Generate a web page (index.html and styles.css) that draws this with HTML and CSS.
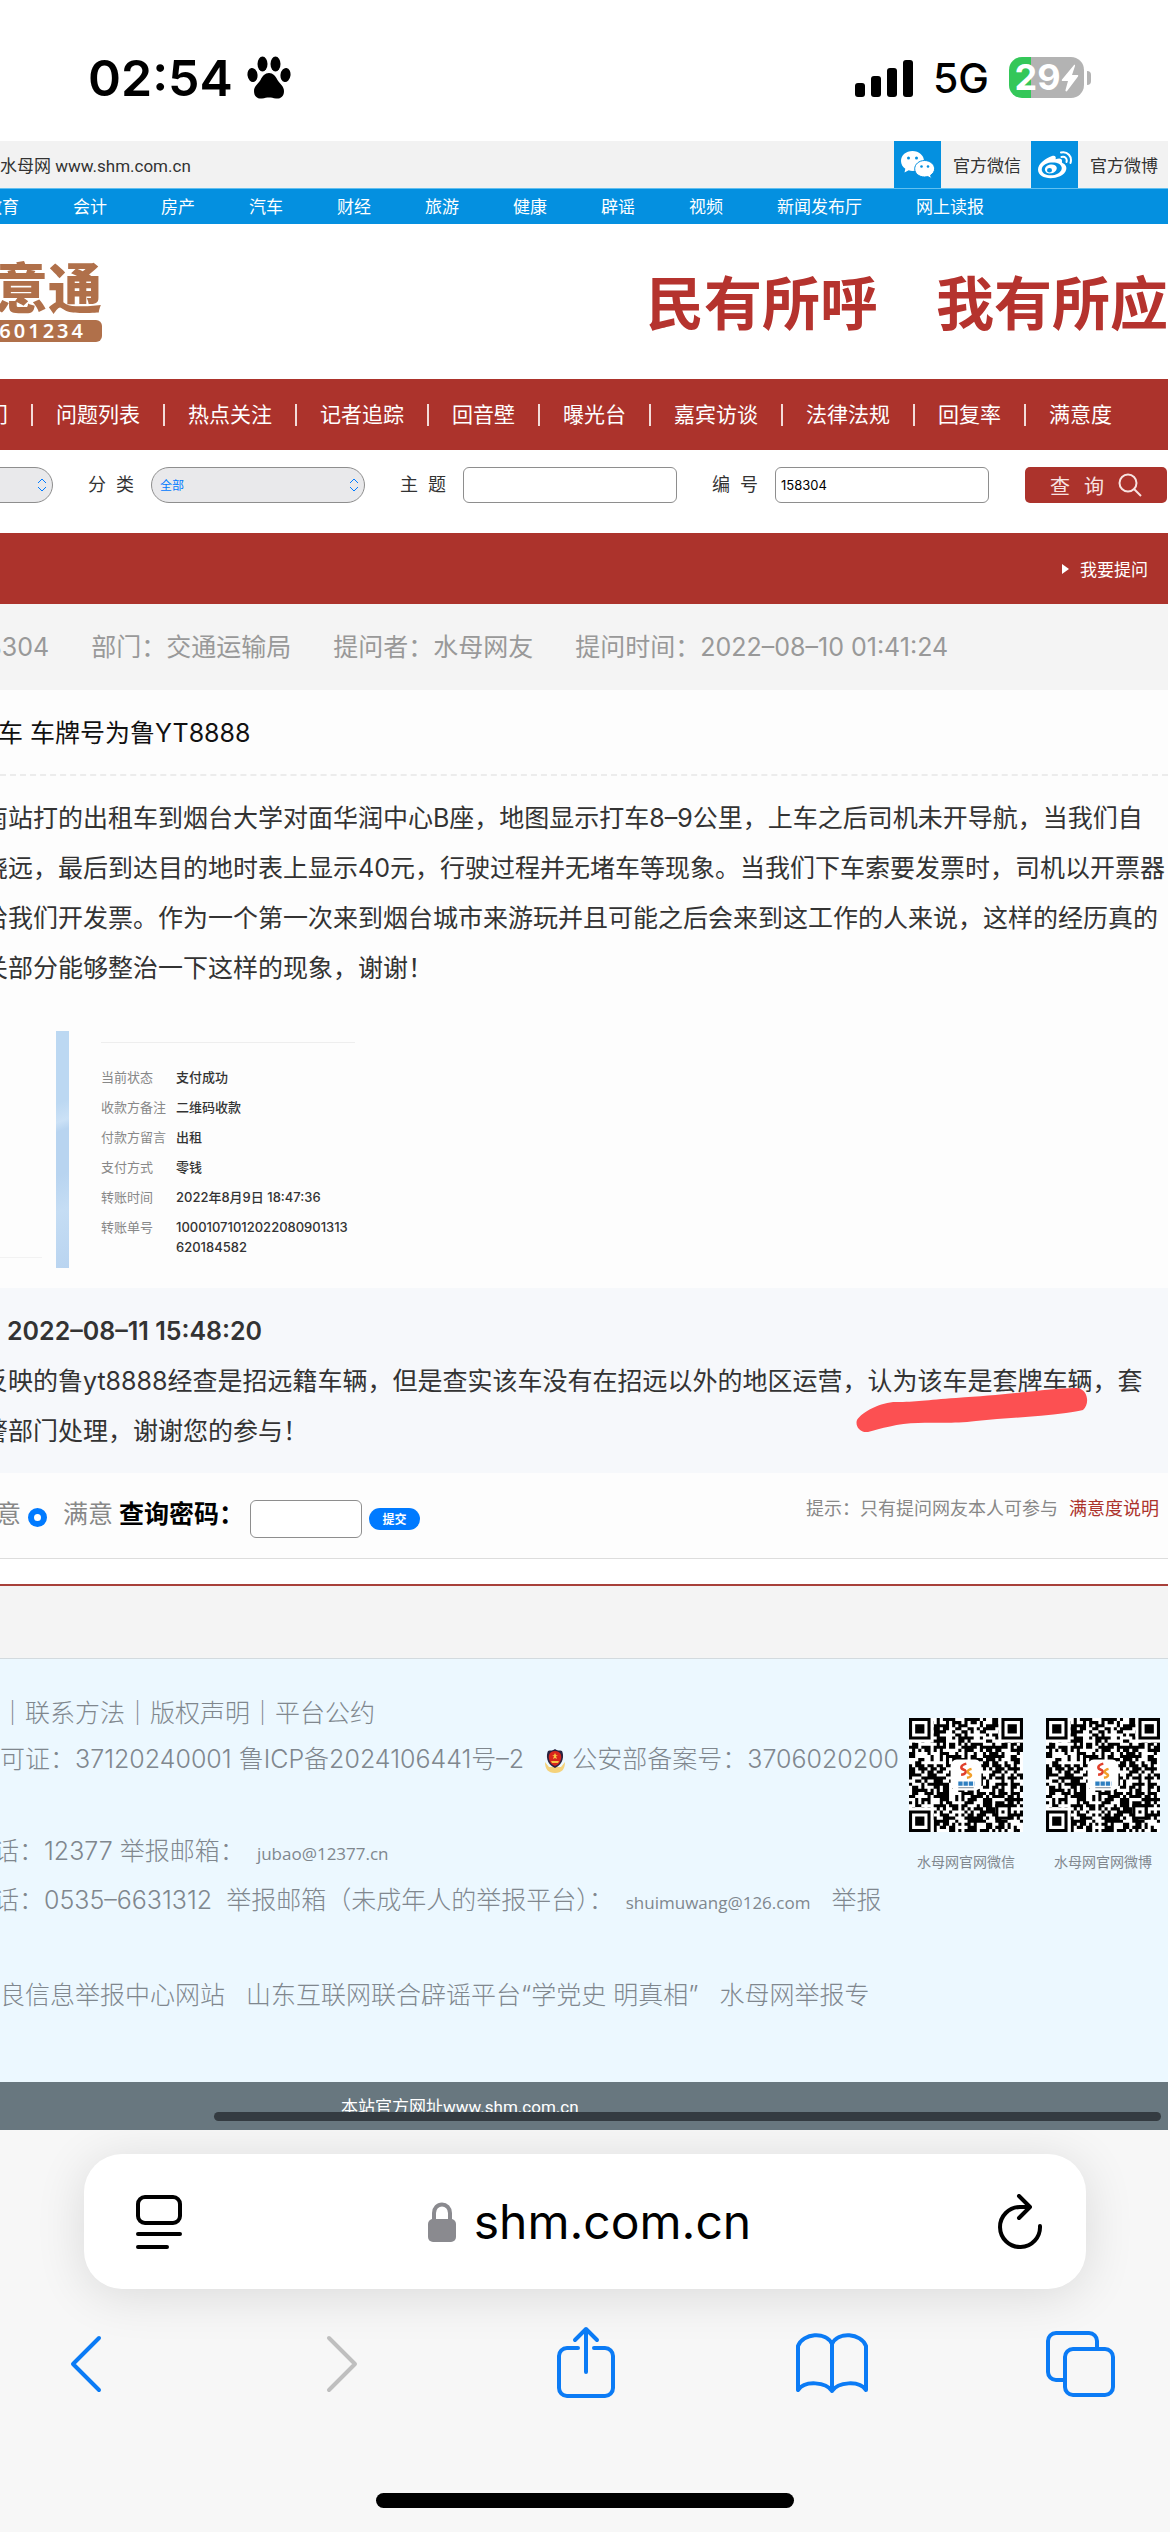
FILE: index.html
```html
<!DOCTYPE html>
<html lang="zh-CN">
<head>
<meta charset="utf-8">
<meta name="viewport" content="width=device-width, initial-scale=1">
<title>shm.com.cn</title>
<link rel="stylesheet" href="styles.css">
</head>
<body>
<header class="status">
  <div class="status-side">
    <span class="clock">02:54</span>
    <svg class="paw" width="44" height="44" viewBox="0 0 44 44" aria-hidden="true">
      <ellipse cx="5.500" cy="19" rx="5" ry="7" transform="rotate(-8 5.500 19)"/>
      <ellipse cx="15.500" cy="8" rx="5" ry="7.500"/>
      <ellipse cx="28.500" cy="8" rx="5" ry="7.500"/>
      <ellipse cx="38.500" cy="19" rx="5" ry="7" transform="rotate(8 38.500 19)"/>
      <path d="M22 17c4 0 6.500 3 8.500 7 2 3.500 6.500 6 6.500 11 0 6-4 8-8 7.500-3-.5-4.500-1-7-1s-4 .5-7 1c-4 .5-8-1.500-8-7.500 0-5 4.500-7.500 6.500-11 2-4 4.500-7 8.500-7z"/>
    </svg>
  </div>
  <div class="status-side">
    <svg width="58" height="38" viewBox="0 0 58 38" aria-hidden="true">
      <rect x="0" y="24" width="10" height="14" rx="3"/><rect x="16" y="17" width="10" height="21" rx="3"/><rect x="32" y="9" width="10" height="29" rx="3"/><rect x="48" y="1" width="10" height="37" rx="3"/>
    </svg>
    <span class="network">5G</span>
    <span class="battery"><span class="battery-level">29</span>
      <svg width="18" height="28" viewBox="0 0 18 28" aria-hidden="true"><path d="M13 1 1 15.500c-.6 1 0 1.500.8 1.500H7L4.500 26c-.3 1.500 1 1.800 1.800.8L17 12.500c.6-1 .2-1.500-.8-1.500H11l3-9c.3-1.200-.4-1.800-1-1z" fill="#fff"/></svg>
    </span>
    <span class="battery-tip"></span>
  </div>
</header>

<main class="site">
  <div class="topbar">
    <span class="topbar-name">水母网 www.shm.com.cn</span>
    <a class="social" href="#"><span class="social-icon">
      <svg width="36" height="36" viewBox="0 0 36 36" aria-hidden="true">
        <path fill="#fff" d="M12.500 4C6 4 1 8.300 1 14c0 3.200 1.700 6 4.300 7.800L4.500 25.500l4.200-2.200c1.200.4 2.500.6 3.800.6 6.500 0 11.500-4.400 11.500-9.900S19 4 12.500 4z"/>
        <path fill="#fff" stroke="#0490e0" stroke-width="1" d="M24.500 13.500c-5.500 0-9.800 3.800-9.800 8.300 0 4.600 4.300 8.200 9.800 8.200 1.100 0 2.200-.2 3.200-.5l3.800 2-.9-3.300c2.400-1.500 4-3.900 4-6.400 0-4.500-4.500-8.300-10.100-8.300z"/>
        <g fill="#0490e0"><circle cx="8.500" cy="11" r="1.500"/><circle cx="16.500" cy="11" r="1.500"/><circle cx="21.500" cy="19.500" r="1.300"/><circle cx="28" cy="19.500" r="1.300"/></g>
      </svg></span>官方微信</a>
    <a class="social" href="#"><span class="social-icon">
      <svg width="36" height="36" viewBox="0 0 36 36" aria-hidden="true">
        <path fill="#fff" fill-rule="evenodd" d="M15 9c2.500-1 4.500 0 3.600 3.200 3.500-1.400 7-1.200 6.400 2.300-.2 1 0 1.300 1 1.800 6 3.200 3.500 10-3 13C13 33.500 1 30.500 1 22.500 1 17 8.500 11 15 9zM14 15.500c-6 .6-9.700 4-9.200 7.800.5 3.400 5.200 5.500 10.700 4.900 5.800-.7 9.700-4.200 9.200-7.800-.5-3.400-5-5.500-10.700-4.900z"/>
        <path fill="#fff" fill-rule="evenodd" d="M13.500 17.500c-3.500.5-6 3-5.500 5.700.5 2.400 3.300 3.700 6.500 3.100 3.400-.6 5.700-3.200 5.200-5.700-.5-2.300-3-3.500-6.200-3.100zm-1 3.500a2.500 2.300 0 1 1 0 4.600 2.500 2.300 0 0 1 0-4.600z"/>
        <path fill="none" stroke="#fff" stroke-width="2" stroke-linecap="round" d="M24 5.500c6.500-1.500 11.500 4 9.500 10.500M24.500 10c3.500-1 6 1.700 5 5"/>
      </svg></span>官方微博</a>
  </div>

  <nav class="channels">
    <a href="#">教育</a><a href="#">会计</a><a href="#">房产</a><a href="#">汽车</a><a href="#">财经</a><a href="#">旅游</a><a href="#">健康</a><a href="#">辟谣</a><a href="#">视频</a><a href="#">新闻发布厅</a><a href="#">网上读报</a>
  </nav>

  <div class="banner">
    <div class="logo">
      <div class="logo-name">意通</div>
      <div class="logo-phone">6601234</div>
    </div>
    <div class="slogan">民有所呼　我有所应</div>
  </div>

  <nav class="menu">
    <a href="#">部门</a><a href="#">问题列表</a><a href="#">热点关注</a><a href="#">记者追踪</a><a href="#">回音壁</a><a href="#">曝光台</a><a href="#">嘉宾访谈</a><a href="#">法律法规</a><a href="#">回复率</a><a href="#">满意度</a>
  </nav>

  <form class="search">
    <span class="picker"><select aria-label="部门"><option></option></select>
      <svg width="10" height="14" viewBox="0 0 10 14" aria-hidden="true"><path d="M1 5l4-4 4 4M1 9l4 4 4-4"/></svg></span>
    <label for="kind">分&nbsp; 类</label>
    <span class="picker"><select id="kind"><option>全部</option></select>
      <svg width="10" height="14" viewBox="0 0 10 14" aria-hidden="true"><path d="M1 5l4-4 4 4M1 9l4 4 4-4"/></svg></span>
    <label for="subject">主&nbsp; 题</label>
    <input id="subject" type="text">
    <label for="number">编&nbsp; 号</label>
    <input id="number" type="text" value="158304">
    <button class="search-go" type="button"><span>查</span><span>询</span>
      <svg width="24" height="24" viewBox="0 0 24 24" aria-hidden="true"><circle cx="10" cy="10" r="8.500"/><path d="M16 16l7 7"/></svg></button>
  </form>

  <div class="ask"><a href="#"><svg width="7" height="10" viewBox="0 0 7 10" aria-hidden="true"><path d="M0 0l7 5-7 5z" fill="#fff"/></svg>我要提问</a></div>

  <div class="meta"><span>158304</span><span>部门：交通运输局</span><span>提问者：水母网友</span><span>提问时间：2022–08–10 01:41:24</span></div>

  <h1 class="title">车 车牌号为鲁YT8888</h1>

  <p class="text">南站打的出租车到烟台大学对面华润中心B座，地图显示打车8–9公里，上车之后司机未开导航，当我们自<br>绕远，最后到达目的地时表上显示40元，行驶过程并无堵车等现象。当我们下车索要发票时，司机以开票器<br>给我们开发票。作为一个第一次来到烟台城市来游玩并且可能之后会来到这工作的人来说，这样的经历真的<br>关部分能够整治一下这样的现象，谢谢！</p>

  <div class="shots">
    <div class="shot-prev"></div>
    <div class="shot-strip"></div>
    <dl class="receipt">
      <dt>当前状态</dt><dd>支付成功</dd>
      <dt>收款方备注</dt><dd>二维码收款</dd>
      <dt>付款方留言</dt><dd>出租</dd>
      <dt>支付方式</dt><dd>零钱</dd>
      <dt>转账时间</dt><dd>2022年8月9日 18:47:36</dd>
      <dt>转账单号</dt><dd>10001071012022080901313<br>620184582</dd>
    </dl>
  </div>

  <section class="reply">
    <h2>2022–08–11 15:48:20</h2>
    <p>反映的鲁yt8888经查是招远籍车辆，但是查实该车没有在招远以外的地区运营，认为该车是套牌车辆，套<br>警部门处理，谢谢您的参与！</p>
    <svg class="marker" width="232" height="44" viewBox="0 0 232 44" aria-hidden="true"><path fill="#fc5052" d="M1 31C6 23 25 13 40 13c20 0 30-2 60-4s50-4 80-7c15-2 30-3 42-3 10 2 12 16 5 22-4 1-10 2-17 3-30 4-60 5-90 8-25 3-40 1-58 2C42 34 24 40 12 43 3 44-1 36 1 31z"/></svg>
  </section>

  <form class="rate">
    <span class="rate-choice">不满意</span>
    <input class="radio" id="good" type="radio" name="rate" checked>
    <label class="rate-choice" for="good">满意</label>
    <label class="rate-key" for="key">查询密码：</label>
    <input class="rate-input" id="key" type="text">
    <button class="rate-go" type="button">提交</button>
    <p class="rate-hint">提示：只有提问网友本人可参与 <a href="#">满意度说明</a></p>
  </form>

  <div class="divider"></div>
  <div class="spacer"></div>

  <footer class="footer">
    <div class="legal">
      <p>｜联系方法｜版权声明｜平台公约</p>
      <p>可证：37120240001 鲁ICP备2024106441号–2 &nbsp;<svg class="emblem" width="22" height="24" viewBox="0 0 22 24" aria-hidden="true"><path d="M1 13c0 7 3 11 10 11s10-4 10-11l-4 5H5z" fill="#f5d27a"/><path d="M11 0c2 2 5 1 7 2 2 4 2 13-7 17C2 15 2 6 4 2c2-1 5 0 7-2z" fill="#2a2340"/><path d="M11 2c5 0 7 4 6 8-1 4-3 6-6 7-3-1-5-3-6-7-1-4 1-8 6-8z" fill="#d8261c"/><path d="M11 4l1 2h2l-2 1 1 3-2-1-2 1 1-3-2-1h2zM7 12h8l-1 2H8z" fill="#f7c443"/></svg>公安部备案号：3706020200</p>
      <p>&nbsp;</p>
      <p class="shift">话：12377 举报邮箱： <span class="mail">jubao@12377.cn</span></p>
      <p class="shift">话：0535–6631312 &nbsp;举报邮箱（未成年人的举报平台）： <span class="mail">shuimuwang@126.com</span> &nbsp;&nbsp;举报</p>
      <p>&nbsp;</p>
      <p>良信息举报中心网站 &nbsp;&nbsp;山东互联网联合辟谣平台“学党史 明真相” &nbsp;&nbsp;水母网举报专</p>
    </div>
    <figure class="code"><svg class="qr" width="114" height="114" viewBox="0 0 37 37" role="img" aria-label="水母网官网微信"></svg><figcaption>水母网官网微信</figcaption></figure>
    <figure class="code"><svg class="qr" width="114" height="114" viewBox="0 0 37 37" role="img" aria-label="水母网官网微博"></svg><figcaption>水母网官网微博</figcaption></figure>
  </footer>
  <div class="official"><span>本站官方网址www.shm.com.cn</span><i class="scrollbar"></i></div>
</main>

<div class="browser">
  <div class="address">
    <button type="button" aria-label="页面菜单"><svg width="46" height="56" viewBox="0 0 46 56"><path d="M9 3h28a7 7 0 0 1 7 7v12a7 7 0 0 1-7 7H9a7 7 0 0 1-7-7V10a7 7 0 0 1 7-7zM2 40h42M2 53h29"/></svg></button>
    <span class="host"><svg width="28" height="40" viewBox="0 0 28 40" aria-hidden="true"><rect y="17" width="28" height="23" rx="5" fill="#8a8a8f"/><path d="M6 18v-7a8 8.500 0 0 1 16 0v7" fill="none" stroke="#8a8a8f" stroke-width="4"/></svg>shm.com.cn</span>
    <button type="button" aria-label="刷新"><svg width="46" height="56" viewBox="0 0 46 56"><path d="M43 32a20 20 0 1 1-20-19h9M22 2l11 11-11 11"/></svg></button>
  </div>
  <div class="tools">
    <button type="button" aria-label="后退"><svg width="72" height="76" viewBox="0 0 72 76"><path d="M49 12L23 38l26 26"/></svg></button>
    <button class="off" type="button" aria-label="前进"><svg width="72" height="76" viewBox="0 0 72 76"><path d="M30 12l26 26-26 26"/></svg></button>
    <button type="button" aria-label="分享"><svg width="72" height="76" viewBox="0 0 72 76"><path d="M30 22H19a8 8 0 0 0-8 8v32a8 8 0 0 0 8 8h38a8 8 0 0 0 8-8V30a8 8 0 0 0-8-8H46M38 46V3M27 14L38 3l11 11"/></svg></button>
    <button type="button" aria-label="书签"><svg width="72" height="76" viewBox="0 0 72 76"><path d="M36 65C30 56 9 54 2 64V20C7 7 30 5 36 18c6-13 29-11 34 2v44c-7-10-28-8-34 1zM36 18v47"/></svg></button>
    <button type="button" aria-label="标签页"><svg width="72" height="76" viewBox="0 0 72 76"><path d="M20 54h-9a8 8 0 0 1-8-8V15a8 8 0 0 1 8-8h33a8 8 0 0 1 8 8v6"/><rect x="20" y="23" width="48" height="46" rx="8"/></svg></button>
  </div>
  <div class="home"></div>
</div>
<script src="qr.js"></script>
</body>
</html>
```
FILE: styles.css
```css
* { box-sizing: border-box; }
body {
  margin: 0;
  background: #fff;
  color: #333;
  font-family: Inter, "Noto Sans CJK SC", sans-serif;
  overflow-x: hidden;
}
a { color: inherit; text-decoration: none; }
p, h1, h2, dl, dd, figure { margin: 0; }
button { border: 0; padding: 0; background: none; font-family: inherit; }
input, select { font-family: inherit; margin: 0; }
svg { display: block; flex: none; }

/* status bar */
.status { display: flex; justify-content: space-between; align-items: center; height: 141px; padding: 14px 79px 0 88px; color: #000; }
.status-side { display: flex; align-items: center; }
.clock { font-size: 50px; font-weight: 600; line-height: 60px; margin-right: 14px; }
.network { font-size: 41px; font-weight: 500; margin: 0 20px; }
.battery { display: flex; align-items: center; justify-content: center; width: 75px; height: 41px; border-radius: 13px; background: linear-gradient(90deg, #34c759 22px, #b3b3b3 22px); color: #fff; }
.battery-level { font-size: 36px; font-weight: 700; line-height: 41px; }
.battery-tip { width: 4px; height: 14px; margin-left: 3px; border-radius: 0 6px 6px 0; background: #b3b3b3; }

.site { margin-right: 2px; overflow: hidden; }

/* top strip */
.topbar { display: flex; height: 48px; border-bottom: 1px solid #62c0f0; background: #f2f2f2; font: 17px/50px Roboto, "Noto Sans CJK SC", sans-serif; white-space: nowrap; }
.topbar-name { flex: 1; }
.social { display: flex; width: 137px; gap: 12px; }
.social-icon { display: flex; align-items: center; justify-content: center; width: 47px; height: 47px; background: #0490e0; }
.channels { display: flex; gap: 54px; margin-left: -15px; height: 35px; background: #0490e0; color: #fff; font-size: 17px; line-height: 36px; white-space: nowrap; }

/* banner */
.banner { display: flex; justify-content: space-between; align-items: flex-start; height: 155px; padding-top: 36px; white-space: nowrap; }
.logo { display: flex; flex-direction: column; align-items: flex-end; width: 102px; color: #b0704a; }
.logo-name { font-size: 54px; font-weight: 900; line-height: 60px; }
.logo-phone { display: flex; justify-content: flex-end; width: 140px; height: 22px; padding-right: 16px; border-radius: 6px; background: #b0704a; color: #fff; font: 600 20px/22px "Noto Sans", sans-serif; letter-spacing: 3px; }
.slogan { padding-top: 12px; color: #b5332e; font-size: 58px; font-weight: 700; line-height: 64px; }

/* main menu */
.menu { display: flex; justify-content: flex-end; align-items: center; height: 71px; padding-right: 33px; background: #ac332c; color: #fff; font-size: 21px; line-height: 22px; white-space: nowrap; }
.menu a { padding: 0 23px; border-left: 2px solid #f3dcda; }

/* search */
.search { display: flex; justify-content: flex-end; align-items: flex-start; height: 83px; padding-top: 17px; background: #fff; font-size: 18px; line-height: 36px; white-space: nowrap; }
.search label { flex: none; width: 98px; padding-left: 35px; }
.search input, .search select { flex: none; width: 214px; height: 36px; border: 1px solid #8e8e8e; border-radius: 6px; background: #fff; padding: 0 5px; font-size: 13px; color: #000; }
.search select { appearance: none; border-radius: 18px; background: #e9e9eb; color: #007aff; font-size: 12px; padding: 0 8px; }
.picker { display: grid; flex: none; align-items: center; justify-items: end; }
.picker > * { grid-area: 1 / 1; }
.picker svg { margin-right: 6px; fill: none; stroke: #007aff; stroke-width: 1; pointer-events: none; }
.search-go { display: flex; flex: none; align-items: center; justify-content: center; gap: 14px; width: 142px; height: 36px; margin: 0 1px 0 36px; border-radius: 5px; background: #ac332c; color: #f8e3e1; font-size: 20px; }
.search-go svg { fill: none; stroke: #f8e3e1; stroke-width: 2; }

.ask { display: flex; justify-content: flex-end; align-items: center; height: 71px; padding-right: 20px; background: #ac332c; color: #fff; font-size: 17px; }
.ask a { display: flex; align-items: center; gap: 11px; }

/* question */
.meta { display: flex; justify-content: flex-start; gap: 42px; height: 86px; margin-left: -39px; background: #f4f4f4; color: #999; font-size: 25px; line-height: 86px; white-space: nowrap; }
.title { height: 86px; border-bottom: 2px dashed #ececec; background: #fdfdfd; color: #111; font-size: 25px; font-weight: 400; line-height: 86px; text-indent: -2px; white-space: nowrap; }
.text { padding: 17px 0 38px; background: #fdfdfd; font-size: 25px; line-height: 50px; white-space: nowrap; margin-left: -17px; }
.shots { display: flex; padding-bottom: 20px; background: #fdfdfd; }
.shot-prev { width: 42px; height: 227px; border-bottom: 1px solid #f2f2f2; margin-right: 14px; }
.shot-strip { width: 13px; height: 237px; background: linear-gradient(160deg, #bcd8f2 0 30%, #cbe1f6 38%, #b8d4f0 42% 60%, #c5ddf4 75%, #b9d4f0); }
.receipt { display: grid; grid-template-columns: 65px auto; gap: 10px; align-content: start; width: 254px; margin: 11px 0 0 32px; padding-top: 24px; border-top: 1px solid #eee; color: #888; font-size: 13px; line-height: 20px; white-space: nowrap; }
.receipt dd { color: #333; font-weight: 500; }

/* reply */
.reply { position: relative; padding: 18px 0 17px; background: #f6f8fb; font-size: 25px; line-height: 50px; white-space: nowrap; }
.reply h2 { padding-left: 7px; font-size: 25px; font-weight: 600; }
.reply p { margin-left: -17px; }
.marker { position: absolute; left: 856px; top: 101px; overflow: visible; }

.rate { display: flex; align-items: center; height: 86px; border-bottom: 1px solid #ddd; background: #fdfdfd; color: #888; font-size: 25px; line-height: 38px; white-space: nowrap; }
.rate-choice, .rate-key { margin-bottom: 4px; }
.rate .rate-choice:first-child { margin: 0 7px 4px -54px; }
.radio { appearance: none; width: 19px; height: 19px; margin-top: 4px; margin-right: 16px; border: 6px solid #007aff; border-radius: 50%; background: #fff; }
.rate-key { margin-left: 6px; color: #000; font-weight: 700; }
.rate-input { width: 112px; height: 38px; margin: 6px 7px 0 6px; border: 1px solid #8e8e8e; border-radius: 6px; background: #fff; }
.rate-go { width: 51px; height: 22px; margin-top: 6px; border-radius: 11px; background: #007aff; color: #fff; font-size: 12px; font-weight: 700; }
.rate-hint { margin: 0 9px 14px auto; font-size: 18px; }
.rate-hint a { margin-left: 6px; color: #ac332c; }
.divider { height: 27px; border-bottom: 2px solid #a8403a; background: #fff; }
.spacer { height: 73px; border-bottom: 1px solid #d3dade; background: #f4f4f4; }

/* footer */
.footer { display: flex; height: 423px; padding: 31px 8px 0 0; background: #ecf8ff; color: #80878e; }
.legal { flex: 1; min-width: 0; font-size: 25px; font-weight: 300; line-height: 46px; white-space: nowrap; }
.legal .shift { margin-left: -6px; }
.emblem { display: inline-block; vertical-align: middle; margin: 0 6px; }
.mail { margin-left: 5px; font: 400 17px/46px "Open Sans", sans-serif; }
.code { margin: 28px 0 0 23px; font-size: 14px; line-height: 20px; text-align: center; }
.code figcaption { margin-top: 20px; }
.official { position: relative; height: 48px; padding-left: 341px; background: #68777f; color: #fff; font: 17px/50px Roboto, "Noto Sans CJK SC", sans-serif; }
.scrollbar { position: absolute; left: 214px; right: 7px; bottom: 9px; height: 9px; border-radius: 5px; background: #343b41; }

/* browser controls */
.browser { padding: 24px 0; background: #f7f7f7; }
.address { display: flex; justify-content: space-between; align-items: center; height: 135px; margin: 0 84px; padding: 0 43px 0 52px; border-radius: 38px; background: #fff; box-shadow: 0 6px 50px rgba(0, 0, 0, .12); }
.address button svg, .tools svg { fill: none; stroke: #000; stroke-width: 4; stroke-linecap: round; stroke-linejoin: round; }
.host { display: flex; align-items: center; gap: 18px; color: #000; font-size: 48px; line-height: 60px; }
.tools { display: flex; justify-content: space-between; margin: 37px 53px 0 50px; }
.tools svg { stroke: #0b7bf5; }
.tools .off svg { stroke: #bfbfbf; }
.home { width: 418px; height: 15px; margin: 91px auto 0; border-radius: 8px; background: #000; }
```
FILE: qr.js
```js
// Draws the code modules, the finder squares and the centre badge.
(function () {
  function finder(x, y) {
    return '<path fill="#fff" d="M' + (x - 1) + ' ' + (y - 1) + 'h9v9h-9z"/>' +
      '<path fill="#000" fill-rule="evenodd" d="M' + x + ' ' + y + 'h7v7h-7zm1 1v5h5v-5zm1 1h3v3h-3z"/>';
  }
  var seed = 158304, d = '';
  for (var y = 0; y < 37; y++) {
    for (var x = 0; x < 37; x++) {
      seed = (seed * 1103515245 + 12345) % 2147483648;
      if ((seed >> 12) % 100 < 54) d += 'M' + x + ' ' + y + 'h1v1h-1z';
    }
  }
  var art = '<path fill="#fff" d="M0 0h37v37H0z"/><path fill="#000" d="' + d + '"/>' +
    finder(0, 0) + finder(30, 0) + finder(0, 30) +
    '<path fill="#000" d="M28 28h5v5h-5z"/><path fill="#fff" d="M29 29h3v3h-3z"/><path fill="#000" d="M30 30h1v1h-1z"/>' +
    '<rect x="13.500" y="13.500" width="10" height="10" rx="2" fill="#fff"/>' +
    '<path fill="none" stroke="#e0402c" stroke-width=".8" d="M18.600 14.800c-2 .5-2 1.600-.8 2s.6 1.500-.9 1.600"/>' +
    '<path fill="none" stroke="#f2a02c" stroke-width=".8" d="M20.300 16.500c-1.600.4-1.500 1.200-.6 1.600s.3 1.200-.9 1.300"/>' +
    '<path stroke="#2f7fc0" stroke-width="1.400" stroke-dasharray="1.400 .3" d="M16 21.300h5.200"/>' +
    '<path stroke="#9aa4ae" stroke-width=".4" d="M16 22.600h5"/>';
  document.querySelectorAll('.qr').forEach(function (el) { el.innerHTML = art; });
})();
```
